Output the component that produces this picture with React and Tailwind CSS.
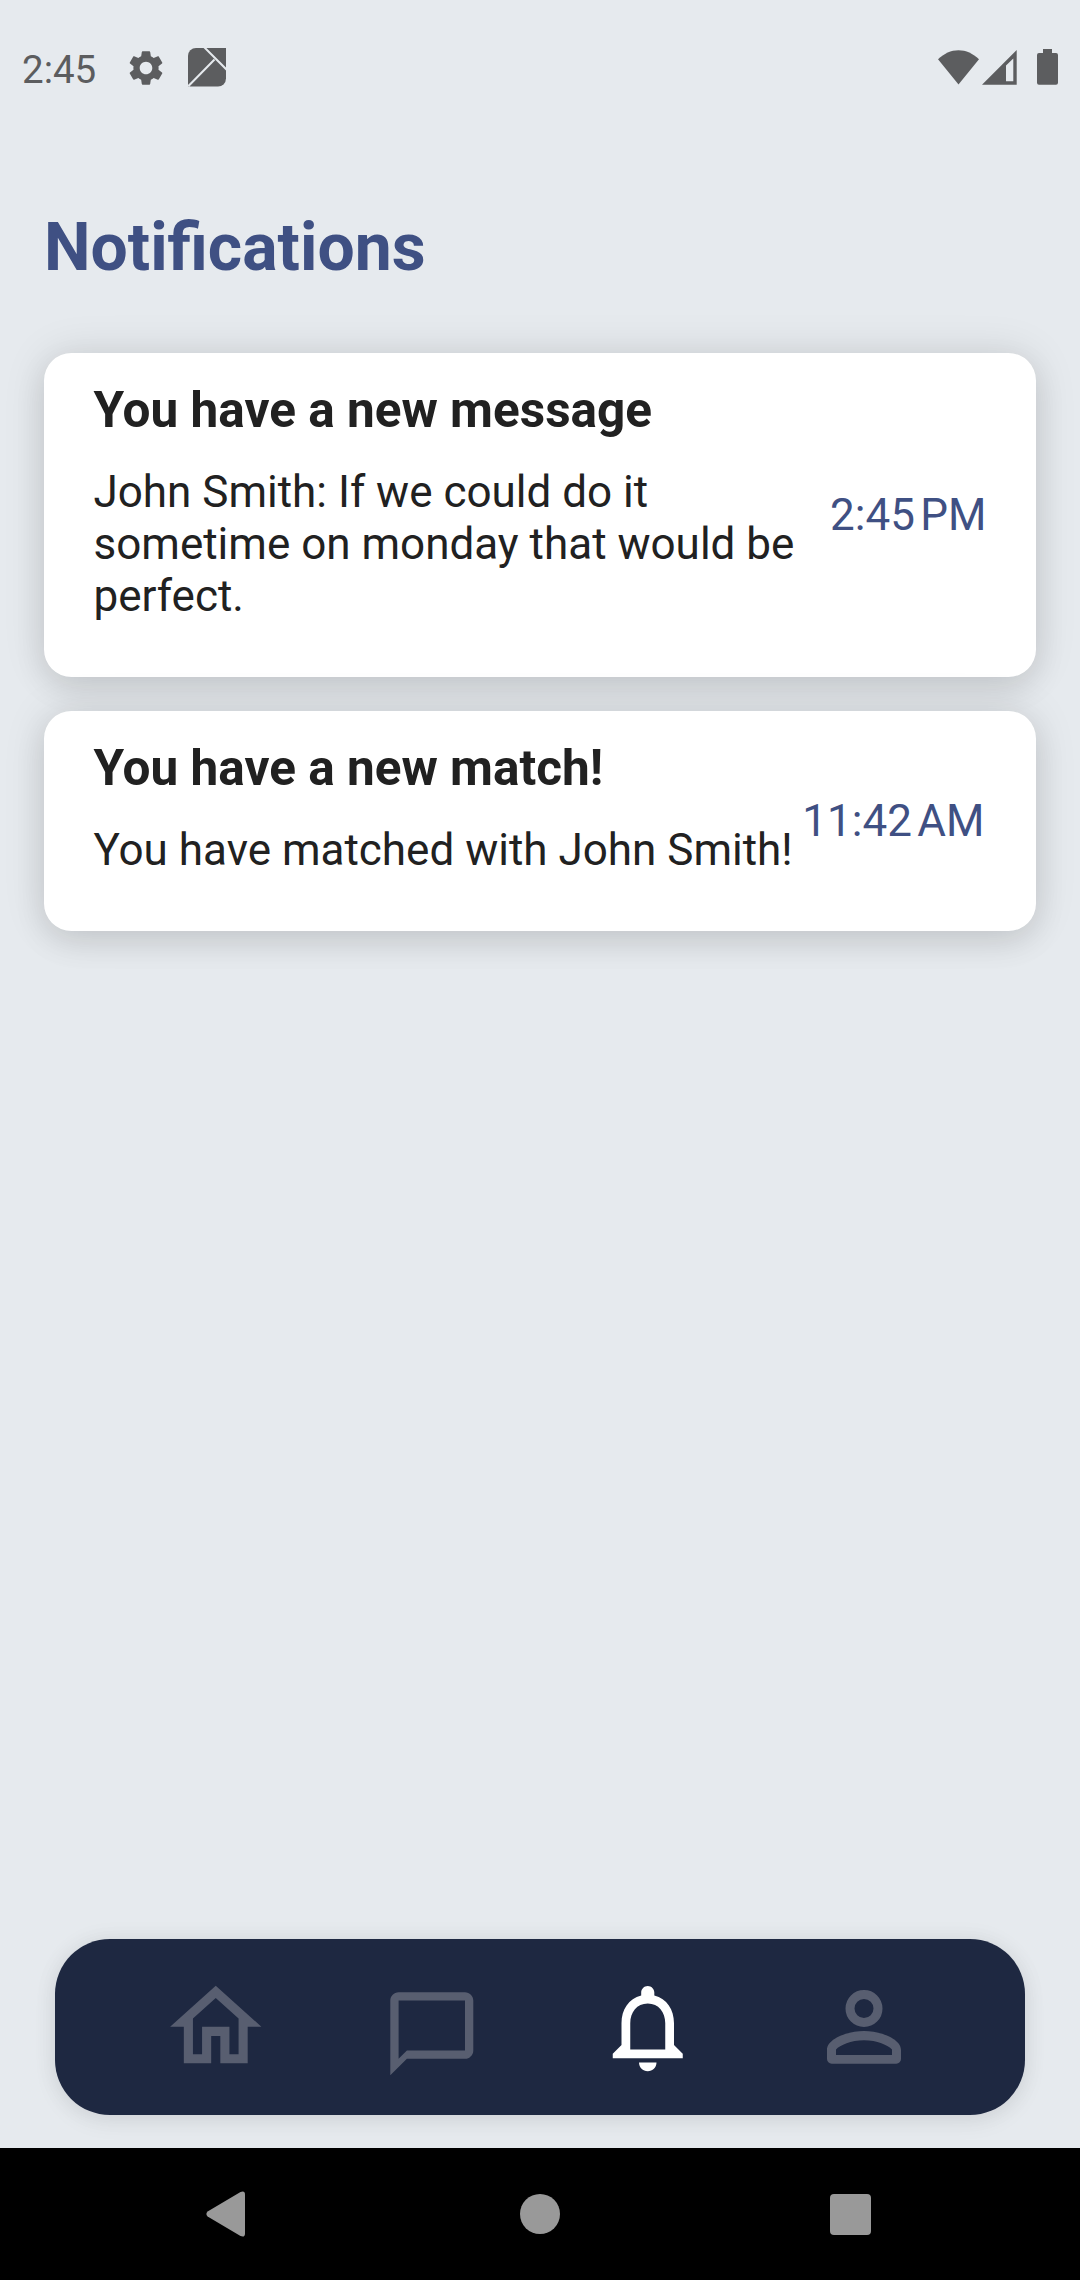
const notifications = [
  {
    title: "You have a new message",
    body: "John Smith: If we could do it sometime on monday that would be perfect.",
    time: "2:45\u202FPM",
    timeSpacing: "-ml-5",
  },
  {
    title: "You have a new match!",
    body: "You have matched with John Smith!",
    time: "11:42\u202FAM",
    timeSpacing: "-ml-5 mr-[2px]",
  },
];

function StatusBar() {
  return (
    <header className="flex h-[134px] items-start justify-between pl-[22px] pr-[22px] pt-[46px] text-[#5c5d5f]">
      <div className="flex items-start">
        <span className="w-[103px] pt-px text-[38.5px] leading-[46px]">2:45</span>
        <svg className="mt-[0.5px] h-[42px] w-[42px]" viewBox="0 0 24 24" fill="currentColor">
          <path d="M19.14 12.94c.04-.3.06-.61.06-.94 0-.32-.02-.64-.07-.94l2.03-1.58c.18-.14.23-.41.12-.61l-1.92-3.32c-.12-.22-.37-.29-.59-.22l-2.39.96c-.5-.38-1.03-.7-1.62-.94l-.36-2.54c-.04-.24-.24-.41-.48-.41h-3.84c-.24 0-.43.17-.47.41l-.36 2.54c-.59.24-1.13.57-1.62.94l-2.39-.96c-.22-.08-.47 0-.59.22L2.74 8.87c-.12.21-.08.47.12.61l2.03 1.58c-.05.3-.09.63-.09.94s.02.64.07.94l-2.03 1.58c-.18.14-.23.41-.12.61l1.92 3.32c.12.22.37.29.59.22l2.39-.96c.5.38 1.03.7 1.62.94l.36 2.54c.05.24.24.41.48.41h3.84c.24 0 .44-.17.47-.41l.36-2.54c.59-.24 1.13-.56 1.62-.94l2.39.96c.22.08.47 0 .59-.22l1.92-3.32c.12-.22.07-.47-.12-.61l-2.01-1.58zM12 15.6c-1.98 0-3.6-1.62-3.6-3.6s1.62-3.6 3.6-3.6 3.6 1.62 3.6 3.6-1.62 3.6-3.6 3.6z" />
        </svg>
        <svg className="ml-[21px] mt-0.5 h-[39px] w-[38px]" viewBox="0 0 38 39">
          <path d="M8 0H38V30.5a8 8 0 0 1-8 8H0V8a8 8 0 0 1 8-8z" fill="currentColor" />
          <path d="M16 -1L39 22M0.5 38L26.5 11.5" stroke="#e6eaee" strokeWidth="2" fill="none" />
          <path d="M0 36.5L2 38.5H0z" fill="#e6eaee" />
        </svg>
      </div>
      <div className="flex items-start">
        <svg className="mt-1 h-[35px] w-[41px]" viewBox="0 0 41 35" fill="currentColor">
          <path d="M20.5 34.5L0 9.3C6 3.6 13 .3 20.5 .3S35 3.6 41 9.3z" />
        </svg>
        <svg className="ml-[3px] mt-1 h-[35px] w-[35px]" viewBox="0 0 35 35" fill="currentColor" fillRule="evenodd">
          <path d="M0 34.7H34.7V0zM24 15.5L31.3 8.5V31.2H24z" />
        </svg>
        <svg className="ml-5 mt-[3px] h-[36px] w-[21px]" viewBox="0 0 21 36" fill="currentColor">
          <path d="M6 0h9v4h4a2 2 0 0 1 2 2v27.7a2 2 0 0 1-2 2H2a2 2 0 0 1-2-2V6a2 2 0 0 1 2-2h4z" />
        </svg>
      </div>
    </header>
  );
}

function NotificationCard({ title, body, time, timeSpacing }) {
  return (
    <article className="flex items-center justify-between rounded-[27.5px] bg-white px-[49.5px] pb-[55px] pt-[28px] shadow-[0_0_44px_rgba(0,0,0,0.11),0_12px_32px_rgba(0,0,0,0.09)]">
      <div className="w-[706px] shrink-0">
        <h2 className="whitespace-nowrap text-[49.5px] font-bold leading-[58px]">{title}</h2>
        <p className="mt-[27px] text-[44px] leading-[52px]">{body}</p>
      </div>
      <div className={timeSpacing}>
        <time className="mt-[28px] block whitespace-nowrap text-[44px] leading-[52px] text-[#3f5083]">{time}</time>
      </div>
    </article>
  );
}

const tabs = [
  {
    label: "Home",
    size: "h-[109.5px] w-[109.5px]",
    color: "text-[#585e70]",
    d: "M12 5.69l5 4.5V18h-2v-6H9v6H7v-7.81l5-4.5M12 3L2 12h3v8h6v-6h2v6h6v-8h3L12 3z",
  },
  {
    label: "Messages",
    size: "mt-[13px] h-[99.6px] w-[99.6px]",
    color: "text-[#585e70]",
    d: "M20 2H4c-1.1 0-2 .9-2 2v18l4-4h14c1.1 0 2-.9 2-2V4c0-1.1-.9-2-2-2zm0 14H6l-2 2V4h16v12z",
  },
  {
    label: "Notifications",
    size: "h-[105px] w-[105.5px]",
    color: "text-white",
    d: "M12 22c1.1 0 2-.9 2-2h-4c0 1.1.9 2 2 2zm6-6v-5c0-3.07-1.63-5.64-4.5-6.32V4c0-.83-.67-1.5-1.5-1.5s-1.5.67-1.5 1.5v.68C7.64 5.36 6 7.92 6 11v5l-2 2v1h16v-1l-2-2zm-2 1H8v-6c0-2.48 1.51-4.5 4-4.5s4 2.02 4 4.5v6z",
  },
];

function TabBar() {
  return (
    <nav className="mx-[55px] mb-[33px] grid h-[176px] grid-cols-4 items-center justify-items-center rounded-[55px] bg-[#1e2841] px-[53px] shadow-[0_0_24px_rgba(0,0,0,0.05),0_6px_24px_rgba(0,0,0,0.07)]">
      {tabs.map((tab) => (
        <button key={tab.label} aria-label={tab.label} className={tab.color}>
          <svg className={tab.size} viewBox="0 0 24 24" fill="currentColor">
            <path d={tab.d} />
          </svg>
        </button>
      ))}
      <button aria-label="Profile" className="text-[#585e70]">
        <svg className="h-[74px] w-[74px]" viewBox="0 0 74 74" fill="none" stroke="currentColor" strokeWidth="9">
          <circle cx="37" cy="18.5" r="14" />
          <path
            fill="currentColor"
            fillRule="evenodd"
            stroke="none"
            d="M37 41C54 41 74 49 74 60V69a4.7 4.7 0 0 1-4.7 4.7H4.7A4.7 4.7 0 0 1 0 69V60C0 49 20 41 37 41zM37 50.2C24 50.2 13 55 9 59.5V65H65V59.5C61 55 50 50.2 37 50.2z"
          />
        </svg>
      </button>
    </nav>
  );
}

function SystemNav() {
  return (
    <div className="flex h-[132px] items-center bg-black pl-[206px] text-[#999999]">
      <svg className="h-[46px] w-[39px]" viewBox="0 0 39 46" fill="currentColor">
        <path d="M1.6 20.6L34.5 .9Q39 -.8 39 3.5V42.5Q39 46.8 34.5 45.1L1.6 25.4Q-.9 23 1.6 20.6z" />
      </svg>
      <span className="ml-[275px] h-10 w-10 rounded-full bg-[#999999]" />
      <span className="ml-[270px] h-[41px] w-[41px] rounded-[4px] bg-[#999999]" />
    </div>
  );
}

export default function App() {
  return (
    <div className="flex h-[2280px] w-[1080px] flex-col bg-[#e6eaee] font-['Roboto',sans-serif] text-[#212121]">
      <StatusBar />
      <main className="flex-1 px-[44px] pt-[75px]">
        <h1 className="text-[66px] font-bold leading-[78px] text-[#3f5083]">Notifications</h1>
        <section className="mt-[65.5px] flex flex-col gap-[34px]">
          {notifications.map((n) => (
            <NotificationCard key={n.title} {...n} />
          ))}
        </section>
      </main>
      <TabBar />
      <SystemNav />
    </div>
  );
}
